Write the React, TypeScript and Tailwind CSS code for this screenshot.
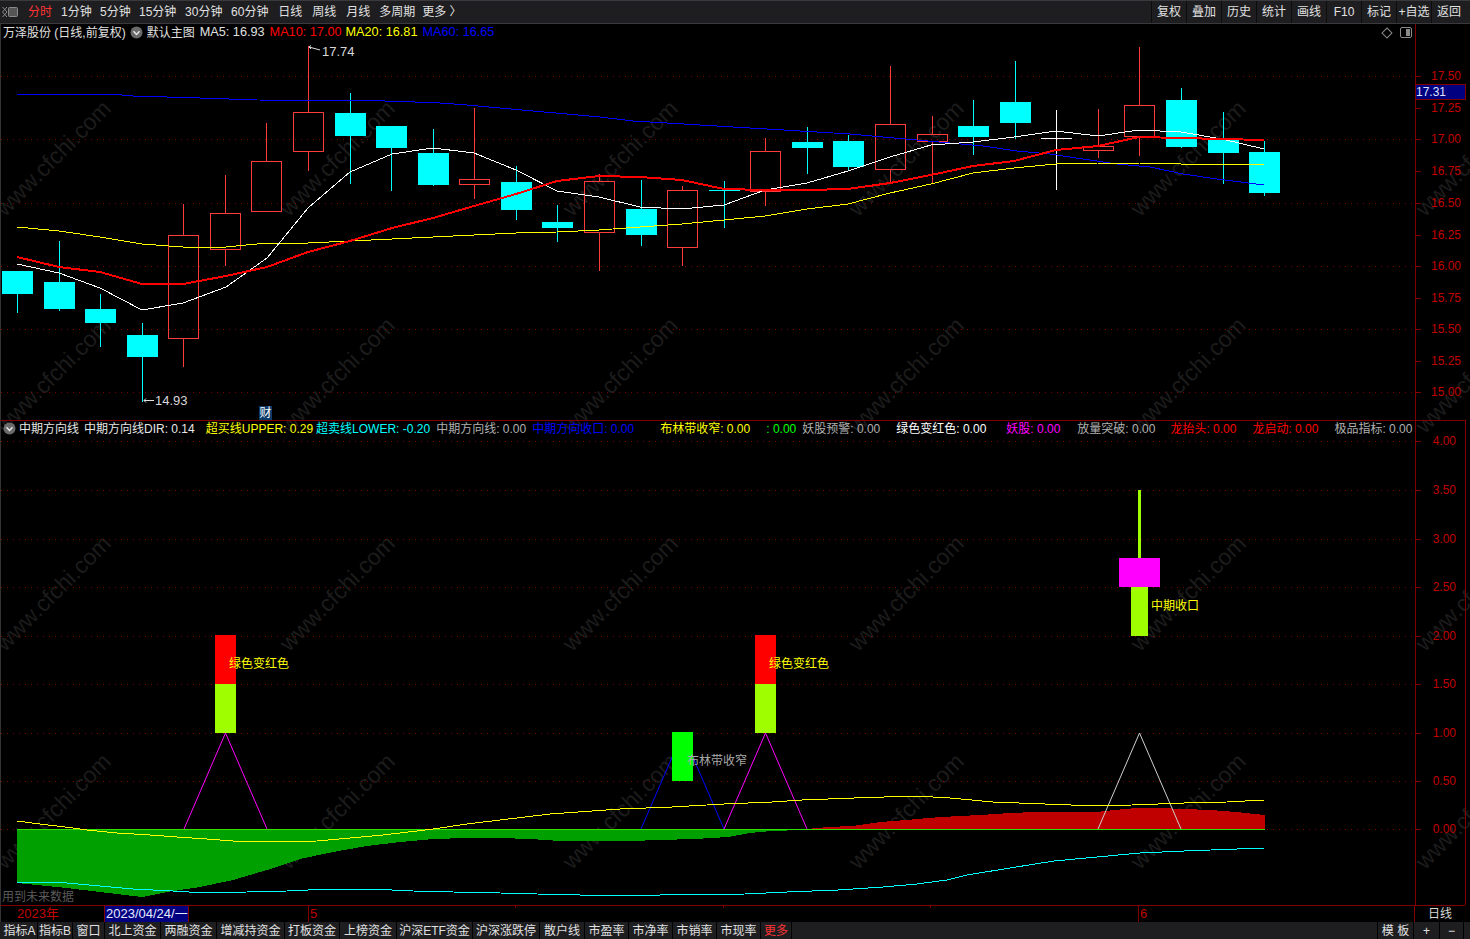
const GRID = "#800000";
const RED = "#ff3c3c";
const CYAN = "#00ffff";

// kind, wick top, body top, body bottom, wick bottom
type Candle = ["c" | "r" | "w", number, number, number, number];
const candles: Candle[] = [
  ["c", 271, 271, 294, 313],
  ["c", 241, 282, 309, 311],
  ["c", 294, 309, 323, 347],
  ["c", 323, 335, 357, 402],
  ["r", 204, 235, 338, 367],
  ["r", 175, 213, 249, 266],
  ["r", 123, 161, 211, 211],
  ["r", 46, 112, 151, 171],
  ["c", 93, 113, 136, 184],
  ["c", 126, 126, 148, 191],
  ["c", 129, 153, 185, 186],
  ["r", 108, 179, 184, 199],
  ["c", 166, 182, 210, 220],
  ["c", 205, 222, 228, 242],
  ["r", 174, 181, 232, 271],
  ["c", 180, 209, 235, 246],
  ["r", 186, 190, 247, 266],
  ["c", 181, 190, 191, 228],
  ["r", 138, 151, 191, 206],
  ["c", 127, 142, 148, 174],
  ["c", 135, 141, 167, 170],
  ["r", 66, 124, 169, 183],
  ["r", 116, 134, 141, 184],
  ["c", 100, 126, 137, 155],
  ["c", 61, 102, 123, 139],
  ["w", 110, 138, 139, 190],
  ["r", 109, 146, 150, 158],
  ["r", 47, 105, 136, 156],
  ["c", 88, 100, 147, 148],
  ["c", 112, 139, 153, 184],
  ["c", 141, 152, 193, 196],
];

const ma5 = "17,264 59,273 100,288 142,310 183,303 226,287 267,258 308,208 350,172 392,154 433,148 474,153 516,170 557,191 599,197 640,207 682,209 724,205 765,190 807,183 848,171 890,157 931,145 973,142 1014,137 1056,131 1098,136 1139,130 1181,132 1222,139 1264,149";
const ma10 = "17,257 59,267 100,272 142,284 183,284 226,276 267,267 308,252 350,241 392,228 433,218 474,206 516,194 557,181 599,176 640,177 682,180 724,189 765,190 807,190 848,189 890,183 931,175 973,166 1014,161 1056,150 1098,146 1139,137 1181,138 1222,139 1264,140";
const ma20 = "17,227 59,231 100,237 142,244 183,247 226,247 267,243 308,243 350,241 392,239 433,237 474,235 516,233 557,232 599,230 640,227 682,224 724,220 765,216 807,209 848,204 890,193 931,184 973,173 1014,168 1056,164 1098,163 1139,163 1181,164 1222,164 1264,164";
const ma60 = "17,95 38,94 110,94 133,96 200,98 257,100 370,100.6 400,101.4 440,103 467,105 500,108 533,111 567,114 600,117 633,121 667,123 700,125 733,127 767,129 800,131 850,134 883,137 917,140 950,143 983,146 1017,151 1050,154 1083,159 1117,164 1150,167 1183,174 1217,179 1264,185";

const upper = "17,821 40,824 73,828 87,830 117,833 150,835 177,837 207,839 233,841 267,842 317,841 350,838 383,835 417,831 433,829 467,824 500,820 550,814 620,809 672,807 724,804 772,802 802,800 854,798 915,796 950,798 993,802 1045,804 1097,806 1132,805 1184,803 1227,802 1264,800";
const lower = "17,882 40,882 67,883 100,886 133,889 173,891 205,893 247,892 287,891 330,889 370,889 413,891 453,892 500,893 537,894 580,895 660,895 745,894 787,892 838,890 883,887 917,884 947,880 967,875 1010,868 1054,861 1140,853 1184,851 1264,848";
const greenArea = "17,829 17,883 67,888 117,894 142,897 167,892 200,887 233,880 267,870 300,859 333,852 367,846 400,842 433,839 467,838 500,838 530,839 560,841 600,841 630,841 660,840 694,839 728,837 750,833 772,831 802,830 807,829";
const redArea = "806,829 828,827 852,826 880,822 906,820 941,817 980,815 1010,813 1036,812 1097,812 1114,810 1136,808 1160,808 1184,809 1210,810 1236,812 1265,815 1265,829";

const mainTicks = [
  ["17.50", 76], ["17.25", 108], ["17.00", 139], ["16.75", 171], ["16.50", 203], ["16.25", 235],
  ["16.00", 266], ["15.75", 298], ["15.50", 329], ["15.25", 361], ["15.00", 392],
] as const;
const subTicks = [
  ["4.00", 441], ["3.50", 490], ["3.00", 539], ["2.50", 587], ["2.00", 636],
  ["1.50", 684], ["1.00", 733], ["0.50", 781], ["0.00", 829],
] as const;

const leftTabs = [
  ["1分钟", ""], ["5分钟", "ml-[8.3px]"], ["15分钟", "ml-[8.3px]"], ["30分钟", "ml-[8.7px]"], ["60分钟", "ml-[8.7px]"],
  ["日线", "ml-[9.7px]"], ["周线", "ml-[10px]"], ["月线", "ml-[10px]"], ["多周期", "ml-[9px]"], ["更多 〉", "ml-[7px]"],
];
const rightBtns = ["复权", "叠加", "历史", "统计", "画线", "F10", "标记", "+自选", "返回"];

const bottomTabs = [
  ["指标A", "w-[36px]"], ["指标B", "w-[35px]"], ["窗口", "w-[32px]"], ["北上资金", "w-[56px]"], ["两融资金", "w-[56px]"],
  ["增减持资金", "w-[68px]"], ["打板资金", "w-[55px]"], ["上榜资金", "w-[57px]"], ["沪深ETF资金", "w-[76px]"], ["沪深涨跌停", "w-[67px]"],
  ["散户线", "w-[45px]"], ["市盈率", "w-[44px]"], ["市净率", "w-[44px]"], ["市销率", "w-[44px]"], ["市现率", "w-[44px]"],
];

const subLegend = [
  ["中期方向线DIR: 0.14", "text-[#e6e6e6] ml-[5px]"],
  ["超买线UPPER: 0.29", "text-[#ffff00] ml-[11px]"],
  ["超卖线LOWER: -0.20", "text-[#00ffff] ml-[3px]"],
  ["中期方向线: 0.00", "text-[#b0b0b0] ml-[6px]"],
  ["中期方向收口: 0.00", "text-[#0000ff] ml-[6px]"],
  ["布林带收窄: 0.00", "text-[#ffff00] ml-[26px]"],
  [": 0.00", "text-[#00ff00] ml-[16px]"],
  ["妖股预警: 0.00", "text-[#b0b0b0] ml-[6px]"],
  ["绿色变红色: 0.00", "text-[#ffffff] ml-[16px]"],
  ["妖股: 0.00", "text-[#ff00ff] ml-[20px]"],
  ["放量突破: 0.00", "text-[#b0b0b0] ml-[17px]"],
  ["龙抬头: 0.00", "text-[#ff0000] ml-[15px]"],
  ["龙启动: 0.00", "text-[#ff0000] ml-[16px]"],
  ["极品指标: 0.00", "text-[#b0b0b0] ml-[16px]"],
];

const wmX = [53, 337, 620, 906, 1188, 1473];
const wmY = [158, 375, 593, 811];

function DotLines({ ys, x1 = 1 }: { ys: number[]; x1?: number }) {
  return (
    <g stroke={GRID} strokeDasharray="1 5">
      {ys.map((y) => (
        <line key={y} x1={x1} x2={1415} y1={y + 0.5} y2={y + 0.5} />
      ))}
    </g>
  );
}

function CandleMark({ c, i }: { c: Candle; i: number }) {
  const [kind, wt, bt, bb, wb] = c;
  const x = Math.round(17 + 41.57 * i);
  const color = kind === "r" ? RED : kind === "w" ? "#ffffff" : CYAN;
  if (kind === "r") {
    return (
      <g stroke={color} fill="none">
        <line x1={x + 0.5} x2={x + 0.5} y1={wt} y2={bt} />
        <line x1={x + 0.5} x2={x + 0.5} y1={bb} y2={wb} />
        <rect x={x - 14.5} y={bt + 0.5} width={30} height={bb - bt} />
      </g>
    );
  }
  return (
    <g>
      <line x1={x + 0.5} x2={x + 0.5} y1={wt} y2={wb} stroke={color} />
      <rect x={x - 15} y={bt} width={31} height={bb - bt} fill={color} />
    </g>
  );
}

function CircleChevron() {
  return (
    <svg width="13" height="13" viewBox="0 0 13 13" className="shrink-0">
      <circle cx="6.5" cy="6.5" r="6" fill="#6a6a6a" />
      <path d="M3.5 5.2 L6.5 8.4 L9.5 5.2" fill="none" stroke="#e8e8e8" strokeWidth="1.4" />
    </svg>
  );
}

function MainChart() {
  return (
    <svg width="1415" height="396" viewBox="0 24 1415 396" shapeRendering="crispEdges" className="block">
      <DotLines ys={[76, 139, 203, 266, 329, 392]} />
      {candles.map((c, i) => (
        <CandleMark key={i} c={c} i={i} />
      ))}
      <polyline points={ma60} fill="none" stroke="#0000ff" />
      <polyline points={ma20} fill="none" stroke="#ffff00" />
      <polyline points={ma5} fill="none" stroke="#ffffff" />
      <polyline points={ma10} fill="none" stroke="#ff0000" strokeWidth="2" />
      <g stroke="#e0e0e0" fill="none" shapeRendering="auto">
        <path d="M320 50 L309 47 M311 45.5 L309 47 L311 49" />
        <path d="M154 400.5 L144 400.5 M146 398.5 L144 400.5 L146 402.5" />
      </g>
      <g fontSize="13" fill="#d8d8d8" fontFamily="'Liberation Sans',sans-serif" shapeRendering="auto">
        <text x="322" y="56">17.74</text>
        <text x="155" y="405">14.93</text>
      </g>
    </svg>
  );
}

function SubChart() {
  return (
    <svg width="1415" height="484" viewBox="0 421 1415 484" shapeRendering="crispEdges" className="block">
      <DotLines ys={[441, 490, 539, 587, 636, 684, 733, 781, 829]} />
      <polygon points={greenArea} fill="#00a000" />
      <polygon points={redArea} fill="#c00000" />
      <line x1="17" x2="1265" y1="829.5" y2="829.5" stroke="#30e000" />
      <g fill="none" shapeRendering="auto">
        <polyline points="184,829 225.5,733 267,829" stroke="#ff00ff" />
        <polyline points="641,829 682.5,733 724,829" stroke="#0000ff" />
        <polyline points="724,829 765.5,733 807,829" stroke="#ff00ff" />
        <polyline points="1098,829 1139.5,733 1181,829" stroke="#d0d0d0" />
      </g>
      <polyline points={upper} fill="none" stroke="#ffff00" />
      <polyline points={lower} fill="none" stroke="#00ffff" />
      <rect x="215" y="635" width="21" height="49" fill="#ff0000" />
      <rect x="215" y="684" width="21" height="49" fill="#9fff00" />
      <rect x="755" y="635" width="21" height="49" fill="#ff0000" />
      <rect x="755" y="684" width="21" height="49" fill="#9fff00" />
      <rect x="672" y="732" width="21" height="49" fill="#00ff00" />
      <rect x="1138" y="490" width="3" height="68" fill="#9fff00" />
      <rect x="1119" y="558" width="41" height="29" fill="#ff00ff" />
      <rect x="1131" y="587" width="17" height="49" fill="#9fff00" />
      <g fontSize="12" fontFamily="'Liberation Sans','Noto Sans CJK SC',sans-serif" shapeRendering="auto">
        <text x="229" y="668" fill="#ffff00">绿色变红色</text>
        <text x="769" y="668" fill="#ffff00">绿色变红色</text>
        <text x="687" y="765" fill="#a8a8a8">布林带收窄</text>
        <text x="1151" y="610" fill="#ffff00">中期收口</text>
      </g>
    </svg>
  );
}

function AxisTick({ label, top }: { label: string; top: number }) {
  return (
    <div className="absolute left-0 right-0 h-[16px] flex items-center" style={{ top }}>
      <div className="w-[5px] h-px bg-[#800000]" />
      <span className="absolute right-[9px] text-[#c00000]">{label}</span>
    </div>
  );
}

export default function App() {
  return (
    <div className="relative w-[1470px] h-[939px] overflow-hidden bg-black flex flex-col text-xs text-[#e0e0e0] font-['Liberation_Sans','Noto_Sans_CJK_SC',sans-serif]">
      {/* watermark sits behind both panes */}
      <div className="absolute inset-0 pointer-events-none">
        {wmX.flatMap((x) =>
          wmY.map((y) => (
            <span
              key={`${x}-${y}`}
              className="absolute w-[160px] text-center text-[23px] leading-[28px] text-[#1c1c1c] -rotate-45 whitespace-nowrap"
              style={{ left: x - 80, top: y - 14 }}
            >
              www.cfchi.com
            </span>
          ))
        )}
      </div>

      {/* top toolbar */}
      <div className="relative h-[24px] shrink-0 flex items-center justify-between bg-[#1e1e20] border-t border-b border-[#3a3a3e] pr-[4px]">
        <div className="flex items-center h-full">
          <svg width="16" height="12" viewBox="0 0 16 12" className="ml-[2px] mr-[10px]">
            <path d="M0.5 1 L5 6 L0.5 11 M5 1 L0.5 6 L5 11" fill="none" stroke="#8a8a8a" />
            <rect x="6.5" y="1.5" width="9" height="9" rx="1" fill="#555" stroke="#8a8a8a" />
          </svg>
          <span className="text-[#ff3333]">分时</span>
          <div className="flex items-center ml-[9px]">
            {leftTabs.map(([t, cls]) => (
              <span key={t} className={cls}>{t}</span>
            ))}
          </div>
        </div>
        <div className="flex h-full">
          {rightBtns.map((b) => (
            <div key={b} className="w-[35px] flex items-center justify-center border-l border-[#0c0c0c] whitespace-nowrap">
              {b}
            </div>
          ))}
        </div>
      </div>

      {/* main pane */}
      <div className="relative h-[396px] shrink-0 flex border-l border-[#333]">
        <div className="relative w-[1414px] overflow-hidden">
          <div className="-ml-px">
            <MainChart />
          </div>
          <div className="absolute top-0 left-[2px] right-0 h-[17px] flex items-center">
            <span>万泽股份 (日线,前复权)</span>
            <span className="ml-[4px]"><CircleChevron /></span>
            <span className="ml-[4px]">默认主图</span>
            <span className="ml-[5px] text-[12.7px]">MA5: 16.93</span>
            <span className="ml-[5px] text-[12.7px] text-[#ff0000]">MA10: 17.00</span>
            <span className="ml-[4px] text-[12.7px] text-[#ffff00]">MA20: 16.81</span>
            <span className="ml-[5px] text-[12.7px] text-[#0000ff]">MA60: 16.65</span>
            <div className="ml-auto mr-[3px] flex items-center gap-[9px]">
              <div className="w-[8px] h-[8px] rotate-45 border border-[#8a8a8a]" />
              <svg width="12" height="11" viewBox="0 0 12 11">
                <rect x="0.5" y="0.5" width="11" height="10" rx="1.5" fill="none" stroke="#8a8a8a" />
                <rect x="6" y="2" width="4" height="7" fill="#8a8a8a" />
              </svg>
            </div>
          </div>
          <span className="absolute left-[258px] top-[382px] w-[13px] h-[14px] leading-[14px] text-center bg-[#0c3a68] text-white">财</span>
        </div>
        <div className="relative flex-1 border-l border-[#800000]">
          {mainTicks.map(([label, y]) => (
            <AxisTick key={label} label={label} top={y - 24 - 8} />
          ))}
          <div className="absolute -left-px top-[60px] w-[51px] h-[16px] leading-[14px] bg-[#000080] border border-[#800000] text-[#dfe4ff]">
            17.31
          </div>
        </div>
      </div>

      {/* indicator pane */}
      <div className="relative h-[485px] shrink-0 flex border-t border-[#800000] border-l border-l-[#333] w-[1466px]">
        <div className="relative w-[1414px] overflow-hidden">
          <div className="-ml-px">
            <SubChart />
          </div>
          <div className="absolute top-0 left-[2px] h-[15px] flex items-center whitespace-nowrap text-[#d8d8d8]">
            <CircleChevron />
            <span className="ml-[3px] text-[#e6e6e6]">中期方向线</span>
            {subLegend.map(([t, cls]) => (
              <span key={t} className={cls}>{t}</span>
            ))}
          </div>
          <span className="absolute left-[1px] top-[468px] text-[#5a5a5a]">用到未来数据</span>
        </div>
        <div className="relative flex-1 border-l border-r border-[#800000]">
          {subTicks.map(([label, y]) => (
            <AxisTick key={label} label={label} top={y - 421 - 8} />
          ))}
        </div>
      </div>

      {/* date axis */}
      <div className="relative h-[17px] shrink-0 w-[1465px] border-t border-[#800000] border-l border-l-[#333] text-[13px] text-[#c00000]">
        <span className="absolute left-[16px] top-0 leading-[16px]">2023年</span>
        <span className="absolute left-[103px] top-0 h-[16px] w-[85px] leading-[16px] bg-[#000080] border-x border-[#800000] text-[#e8ecff] whitespace-nowrap pl-px">2023/04/24/一</span>
        <span className="absolute left-[307px] top-0 h-[16px] leading-[16px] border-l border-[#800000] pl-px">5</span>
        {[515, 723, 930].map((x) => (
          <span key={x} className="absolute top-0 w-px h-[2px] bg-[#800000]" style={{ left: x - 1 }} />
        ))}
        <span className="absolute left-[1137px] top-0 h-[16px] leading-[16px] border-l border-[#800000] pl-px">6</span>
        <span className="absolute left-[1413px] top-0 h-[16px] w-[51px] leading-[16px] text-xs text-center border-l border-[#800000] text-[#d8d8d8]">日线</span>
      </div>

      {/* bottom tabs */}
      <div className="h-[17px] shrink-0 flex items-center bg-[#1e1e20] pl-[2px] pr-[6px]">
        {bottomTabs.map(([t, w]) => (
          <div key={t} className={`${w} h-full flex items-center justify-center border-r border-black whitespace-nowrap`}>{t}</div>
        ))}
        <div className="w-[31px] h-full flex items-center justify-center border-r border-black text-[#ff3333]">更多</div>
        <div className="ml-auto w-[37px] h-full flex items-center justify-center border-x border-black">模 板</div>
        <div className="w-[26px] h-full flex items-center justify-center border-r border-black">+</div>
        <div className="w-[24px] h-full flex items-center justify-center border-r border-black">−</div>
      </div>
    </div>
  );
}
